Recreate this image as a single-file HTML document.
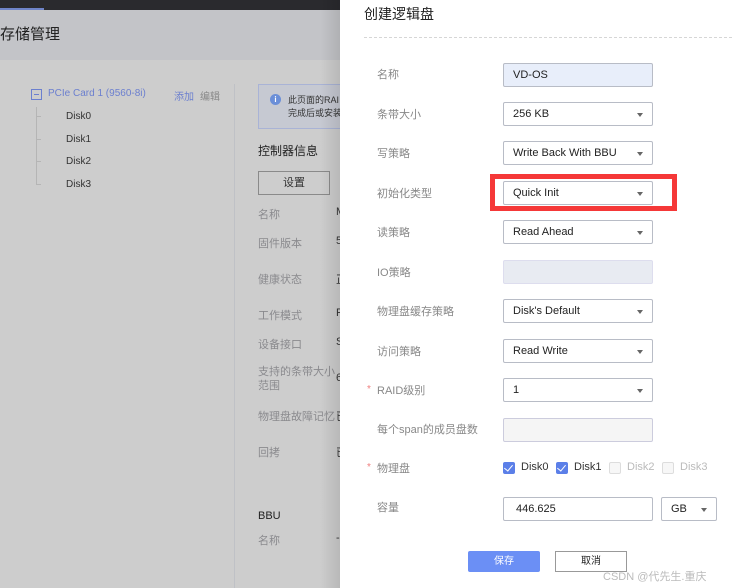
<!DOCTYPE html>
<html><head><meta charset="utf-8"><style>
*{margin:0;padding:0;box-sizing:border-box}
body{width:732px;height:588px;overflow:hidden;position:relative;background:#cdcdcd;font-family:"Liberation Sans","Noto Sans CJK SC",sans-serif;font-size:11px;color:#333}
.a{position:absolute;white-space:nowrap}
.lab{color:#888;font-size:11px}
.g{color:#8a8a8e}
.inp{position:absolute;left:503px;width:150px;height:24px;border:1px solid #b8bcc6;background:#fff;font-size:11px;padding-left:9px;display:flex;align-items:center;color:#222;border-radius:2px}
.inp.s::after{content:"";position:absolute;right:9px;top:10px;border:3.5px solid transparent;border-top:4px solid #666}
.cb{position:absolute;width:12px;height:12px;border-radius:2px}
.cb.on{background:#5b7fe8}
.cb.on::after{content:"";position:absolute;left:3px;top:1px;width:4px;height:7px;border:solid #fff;border-width:0 1.3px 1.3px 0;transform:rotate(40deg)}
.cb.off{border:1px solid #ddd;background:#f7f7f7}
</style></head><body>
<div class="a" style="left:0;top:0;width:340px;height:10px;background:#2a2a2e"></div>
<div class="a" style="left:0;top:8px;width:44px;height:2px;background:#6f84c8"></div>
<div class="a" style="left:0;top:10px;width:340px;height:50px;background:#c3c4c8"></div>
<div class="a" style="left:0;top:23px;font-size:15px;color:#222">存储管理</div>
<div class="a" style="left:31px;top:89px;width:11px;height:11px;border:1px solid #6b7fcf"></div>
<div class="a" style="left:34px;top:94px;width:5px;height:1px;background:#6b7fcf"></div>
<div class="a" style="left:48px;top:88px;color:#6b7fcf;font-size:10px">PCIe Card 1 (9560-8i)</div>
<div class="a" style="left:174px;top:88px;color:#6b7fcf;font-size:10px">添加</div>
<div class="a" style="left:200px;top:88px;color:#888;font-size:10px">编辑</div>
<div class="a" style="left:36px;top:107px;width:1px;height:77px;background:#b5b5b5"></div>
<div class="a" style="left:36px;top:116px;width:5px;height:1px;background:#b5b5b5"></div>
<div class="a" style="left:36px;top:139px;width:5px;height:1px;background:#b5b5b5"></div>
<div class="a" style="left:36px;top:161px;width:5px;height:1px;background:#b5b5b5"></div>
<div class="a" style="left:36px;top:184px;width:5px;height:1px;background:#b5b5b5"></div>
<div class="a" style="left:66px;top:111px;font-size:10px">Disk0</div>
<div class="a" style="left:66px;top:134px;font-size:10px">Disk1</div>
<div class="a" style="left:66px;top:156px;font-size:10px">Disk2</div>
<div class="a" style="left:66px;top:179px;font-size:10px">Disk3</div>
<div class="a" style="left:234px;top:84px;width:1px;height:504px;background:#bfc1c6"></div>
<div class="a" style="left:258px;top:84px;width:90px;height:45px;border:1px solid #a9b3d6;background:#c6c9d2"></div>
<div class="a" style="left:270px;top:94px;width:11px;height:11px;border-radius:50%;background:#6b8fd8;color:#fff;font-size:8px;text-align:center;line-height:11px;font-weight:bold">i</div>
<div class="a" style="left:288px;top:94px;font-size:9px;color:#333;line-height:13px">此页面的RAI<br>完成后或安装</div>
<div class="a" style="left:258px;top:142px;font-size:12px;color:#222">控制器信息</div>
<div class="a" style="left:258px;top:171px;width:72px;height:24px;border:1px solid #8a8a8a;text-align:center;line-height:22px;font-size:11px">设置</div>
<div class="a g" style="left:258px;top:206px">名称</div><div class="a" style="left:336px;top:206px">M</div>
<div class="a g" style="left:258px;top:235px">固件版本</div><div class="a" style="left:336px;top:235px">5</div>
<div class="a g" style="left:258px;top:271px">健康状态</div><div class="a" style="left:336px;top:271px">正</div>
<div class="a g" style="left:258px;top:307px">工作模式</div><div class="a" style="left:336px;top:307px">R</div>
<div class="a g" style="left:258px;top:336px">设备接口</div><div class="a" style="left:336px;top:336px">S</div>
<div class="a g" style="left:258px;top:365px;line-height:14px;white-space:normal;width:80px">支持的条带大小<br>范围</div><div class="a" style="left:336px;top:372px">6</div>
<div class="a g" style="left:258px;top:408px">物理盘故障记忆</div><div class="a" style="left:336px;top:408px">已</div>
<div class="a g" style="left:258px;top:444px">回拷</div><div class="a" style="left:336px;top:444px">已</div>
<div class="a" style="left:258px;top:510px;color:#222">BBU</div>
<div class="a g" style="left:258px;top:532px">名称</div><div class="a" style="left:336px;top:532px">-</div>
<div class="a" style="left:320px;top:0;width:20px;height:588px;background:linear-gradient(to right,rgba(0,0,0,0),rgba(0,0,0,.1))"></div>
<div class="a" style="left:340px;top:0;width:392px;height:588px;background:#fff"></div>
<div class="a" style="left:364px;top:4px;font-size:14px;color:#222">创建逻辑盘</div>
<div class="a" style="left:364px;top:37px;width:368px;border-top:1px dashed #d6d6d6"></div>

<div class="a lab" style="left:377px;top:66px">名称</div>
<div class="inp" style="top:63px;background:#e8eefa">VD-OS</div>
<div class="a lab" style="left:377px;top:106px">条带大小</div>
<div class="inp s" style="top:102px">256 KB</div>
<div class="a lab" style="left:377px;top:145px">写策略</div>
<div class="inp s" style="top:141px">Write Back With BBU</div>
<div class="a lab" style="left:377px;top:185px">初始化类型</div>
<div class="inp s" style="top:181px">Quick Init</div>
<div class="a" style="left:490px;top:174px;width:187px;height:37px;border:5px solid #f53838"></div>
<div class="a lab" style="left:377px;top:224px">读策略</div>
<div class="inp s" style="top:220px">Read Ahead</div>
<div class="a lab" style="left:377px;top:264px">IO策略</div>
<div class="inp" style="top:260px;background:#e8ebf2;border-color:#dde"></div>
<div class="a lab" style="left:377px;top:303px">物理盘缓存策略</div>
<div class="inp s" style="top:299px">Disk's Default</div>
<div class="a lab" style="left:377px;top:343px">访问策略</div>
<div class="inp s" style="top:339px">Read Write</div>
<div class="a" style="left:367px;top:384px;color:#f08080;font-size:10px">*</div>
<div class="a lab" style="left:377px;top:382px">RAID级别</div>
<div class="inp s" style="top:378px">1</div>
<div class="a lab" style="left:377px;top:421px">每个span的成员盘数</div>
<div class="inp" style="top:418px;background:#f5f5f5;border-color:#ccd"></div>
<div class="a" style="left:367px;top:462px;color:#f08080;font-size:10px">*</div>
<div class="a lab" style="left:377px;top:460px">物理盘</div>
<div class="cb on" style="left:503px;top:462px"></div><div class="a" style="left:521px;top:461px">Disk0</div>
<div class="cb on" style="left:556px;top:462px"></div><div class="a" style="left:574px;top:461px">Disk1</div>
<div class="cb off" style="left:609px;top:462px"></div><div class="a" style="left:627px;top:461px;color:#bbb">Disk2</div>
<div class="cb off" style="left:662px;top:462px"></div><div class="a" style="left:680px;top:461px;color:#bbb">Disk3</div>
<div class="a lab" style="left:377px;top:499px">容量</div>
<div class="inp" style="top:497px;padding-left:12px">446.625</div>
<div class="inp s" style="top:497px;left:661px;width:56px">GB</div>
<div class="a" style="left:468px;top:551px;width:72px;height:21px;background:#6b8ff5;color:#fff;text-align:center;line-height:21px;font-size:10px;border-radius:2px">保存</div>
<div class="a" style="left:555px;top:551px;width:72px;height:21px;border:1px solid #999;text-align:center;line-height:19px;font-size:10px;color:#222">取消</div>
<div class="a" style="left:603px;top:568px;color:#bbb;font-size:11px">CSDN @代先生.重庆</div>
</body></html>
